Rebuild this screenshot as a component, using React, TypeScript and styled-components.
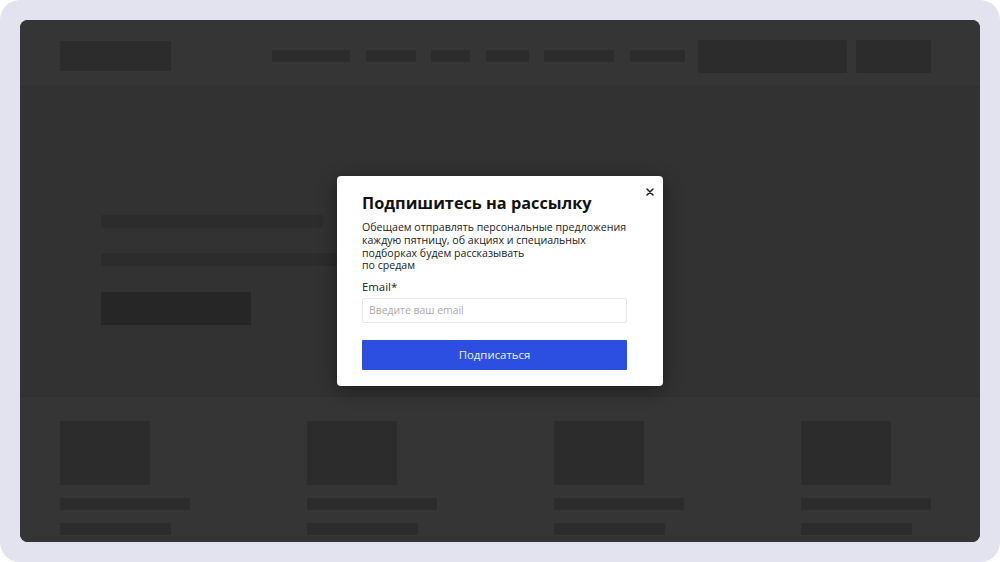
import React from "react";
import styled, { createGlobalStyle } from "styled-components";

const GlobalStyle = createGlobalStyle`
  html, body {
    margin: 0;
    padding: 0;
    background: #ffffff;
  }
  body {
    font-family: "Open Sans", "Noto Sans", sans-serif;
  }
`;

const navWidths = [78, 50, 39, 43, 70, 55];
const columns = [0, 1, 2, 3];

const App = () => {
  return (
    <>
      <GlobalStyle />
      <Backdrop>
        <Frame>
          <Page>
            <Header>
              <Logo />
              <Nav>
                {navWidths.map((w, i) => (
                  <NavItem key={i} $width={w} />
                ))}
              </Nav>
              <HeaderActions>
                <HeaderButton $width={149} />
                <HeaderButton $width={75} />
              </HeaderActions>
            </Header>
            <Hero>
              <Line $width={222} />
              <Line $width={262} />
              <HeroButton />
            </Hero>
            <Cards>
              {columns.map((c) => (
                <Card key={c}>
                  <Thumb />
                  <CardLine $width={130} />
                  <CardLine $width={111} />
                </Card>
              ))}
            </Cards>
          </Page>
          <Scrollbar>
            <ScrollThumb />
            <ScrollArrow />
          </Scrollbar>

          <Overlay>
            <Modal>
              <CloseButton aria-label="Закрыть">
                <svg width="8" height="8" viewBox="0 0 8 8">
                  <path
                    d="M1 1 L7 7 M7 1 L1 7"
                    stroke="#222"
                    strokeWidth="1.5"
                    strokeLinecap="round"
                  />
                </svg>
              </CloseButton>
              <Title>Подпишитесь на рассылку</Title>
              <Description>
                Обещаем отправлять персональные предложения
                <br />
                каждую пятницу, об акциях и специальных
                <br />
                подборках будем рассказывать
                <br />
                по средам
              </Description>
              <Label>Email*</Label>
              <EmailInput placeholder="Введите ваш email" />
              <SubmitButton>Подписаться</SubmitButton>
            </Modal>
          </Overlay>
        </Frame>
      </Backdrop>
    </>
  );
};

export default App;

const Backdrop = styled.div`
  width: 1000px;
  height: 562px;
  box-sizing: border-box;
  padding: 20px;
  background: #e3e3f0;
  border-radius: 20px;
`;

const Frame = styled.div`
  position: relative;
  display: flex;
  width: 960px;
  height: 522px;
  border-radius: 8px;
  overflow: hidden;
  background: #323232;
`;

const Page = styled.div`
  flex: 1;
  display: flex;
  flex-direction: column;
`;

const Header = styled.div`
  display: flex;
  align-items: center;
  height: 67px;
  padding: 6px 39px 0 40px;
  background: #353535;
  border-bottom: 1px solid #303030;
  box-sizing: border-box;
`;

const Skeleton = styled.div`
  background: #2c2c2c;
  border-radius: 1px;
`;

const Logo = styled(Skeleton)`
  width: 111px;
  height: 30px;
`;

const Nav = styled.div`
  display: flex;
  gap: 15.6px;
  margin-left: 101px;
`;

const NavItem = styled(Skeleton)<{ $width: number }>`
  width: ${(p) => p.$width}px;
  height: 12px;
`;

const HeaderActions = styled.div`
  display: flex;
  gap: 9px;
  margin-left: 13px;
`;

const HeaderButton = styled(Skeleton)<{ $width: number }>`
  width: ${(p) => p.$width}px;
  height: 33px;
`;

const Hero = styled.div`
  display: flex;
  flex-direction: column;
  align-items: flex-start;
  height: 310px;
  box-sizing: border-box;
  padding: 128px 0 0 81px;
  background: #323232;
  border-bottom: 1px solid #303030;
`;

const Line = styled(Skeleton)<{ $width: number }>`
  width: ${(p) => p.$width}px;
  height: 13px;
  margin-bottom: 25px;
`;

const HeroButton = styled.div`
  width: 150px;
  height: 33px;
  margin-top: 1px;
  background: #262626;
`;

const Cards = styled.div`
  flex: 1;
  display: grid;
  grid-template-columns: repeat(4, 247px);
  padding: 24px 0 0 40px;
  background: #353535;
`;

const Card = styled.div`
  display: flex;
  flex-direction: column;
  gap: 13px;
`;

const Thumb = styled(Skeleton)`
  width: 90px;
  height: 64px;
`;

const CardLine = styled(Skeleton)<{ $width: number }>`
  width: ${(p) => p.$width}px;
  height: 12px;
`;

const Scrollbar = styled.div`
  position: relative;
  display: flex;
  flex-direction: column;
  width: 10px;
  background: #303030;
`;

const ScrollThumb = styled.div`
  height: 492px;
  background: #2a2a2a;
`;

const ScrollArrow = styled.div`
  position: absolute;
  bottom: 5px;
  left: 3px;
  width: 0;
  height: 0;
  border-left: 2px solid transparent;
  border-right: 2px solid transparent;
  border-top: 3px solid #111;
`;

const Overlay = styled.div`
  position: absolute;
  inset: 0;
  display: flex;
  align-items: center;
  justify-content: center;
`;

const Modal = styled.div`
  position: relative;
  display: flex;
  flex-direction: column;
  width: 326px;
  box-sizing: border-box;
  padding: 15px 36px 16px 25px;
  background: #ffffff;
  border-radius: 4px;
  box-shadow: 0 4px 18px rgba(0, 0, 0, 0.45);
`;

const CloseButton = styled.button`
  position: absolute;
  top: 11px;
  right: 8px;
  display: flex;
  align-items: center;
  justify-content: center;
  width: 10px;
  height: 10px;
  padding: 0;
  border: none;
  background: none;
  cursor: pointer;
`;

const Title = styled.h2`
  margin: 0;
  font-size: 16.3px;
  line-height: 24px;
  font-weight: 700;
  color: #111;
  white-space: nowrap;
`;

const Description = styled.p`
  margin: 6px 0 0;
  font-size: 10.6px;
  line-height: 12.7px;
  color: #222;
  white-space: nowrap;
`;

const Label = styled.label`
  margin-top: 7px;
  font-size: 11.4px;
  line-height: 16px;
  color: #222;
`;

const EmailInput = styled.input`
  margin-top: 3px;
  height: 25px;
  box-sizing: border-box;
  padding: 0 6px;
  border: 1px solid #e6e6e6;
  border-radius: 2px;
  font-family: "Open Sans", "Noto Sans", sans-serif;
  font-size: 10.4px;
  color: #222;
  outline: none;

  &::placeholder {
    color: #aaaaaa;
  }
`;

const SubmitButton = styled.button`
  margin-top: 17px;
  height: 30px;
  border: none;
  border-radius: 1px;
  background: #2c4fe2;
  color: #eef1ff;
  font-family: "Open Sans", "Noto Sans", sans-serif;
  font-size: 11.4px;
  cursor: pointer;
`;
